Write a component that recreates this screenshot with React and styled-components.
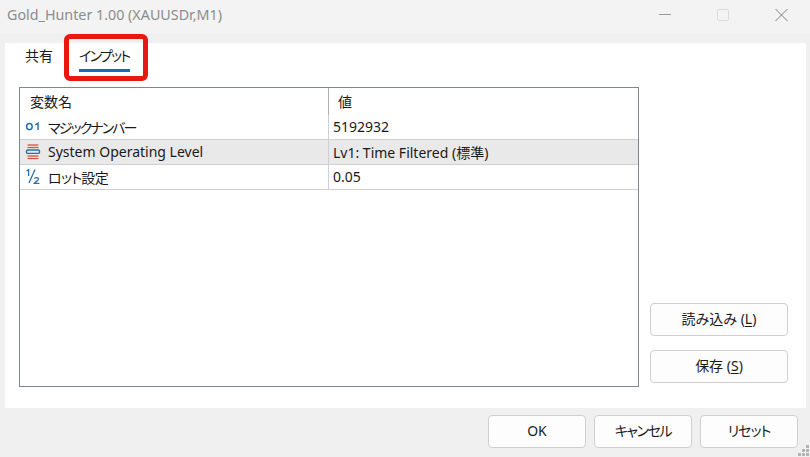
import React from "react";
import styled, { createGlobalStyle } from "styled-components";

const GlobalStyle = createGlobalStyle`
  html, body {
    margin: 0;
    padding: 0;
    background: #f0f0f0;
  }
  body {
    font-family: "Noto Sans", "Noto Sans CJK JP", sans-serif;
    font-size: 14px;
    font-feature-settings: "palt";
    color: #1a1a1a;
  }
`;

const rows = [
  { icon: "int", name: "マジックナンバー", tight: "-1.9px", value: "5192932" },
  { icon: "enum", name: "System Operating Level", value: "Lv1: Time Filtered (標準)", selected: true },
  { icon: "frac", name: "ロット設定", tight: "-0.7px", value: "0.05" },
];

const IntIcon = () => (
  <svg width="16" height="16" viewBox="0 0 16 16" fill="none" stroke="#2a6fb0" strokeWidth="1.5">
    <ellipse cx="4.4" cy="7.6" rx="2.8" ry="3.1" />
    <path d="M10.2 5.8 L13 4.2 V11" />
  </svg>
);

const EnumIcon = () => (
  <svg width="18" height="18" viewBox="0 0 18 18" fill="none">
    <path d="M3.5 2 H14.5" stroke="#d9534a" strokeWidth="1.3" />
    <path d="M3.5 4.5 H14.5" stroke="#d9534a" strokeWidth="1.3" />
    <rect x="2.5" y="7" width="13" height="3.4" rx="1.2" stroke="#2a6fb0" strokeWidth="1.4" />
    <path d="M3.5 13 H14.5" stroke="#d9534a" strokeWidth="1.3" />
    <path d="M3.5 15.5 H14.5" stroke="#d9534a" strokeWidth="1.3" />
  </svg>
);

const FracIcon = () => (
  <svg width="16" height="18" viewBox="0 0 16 18" fill="none" stroke="#2a6fb0" strokeWidth="1.3">
    <path d="M1.5 3 L3.6 1.6 V8" />
    <path d="M10 1.5 L4 15" />
    <path d="M9.3 10.8 C10 9 13.6 9.2 13.4 11.2 C13.3 12.6 10.6 13.6 9.3 15.4 H14.4" />
  </svg>
);

const icons = { int: IntIcon, enum: EnumIcon, frac: FracIcon };

const App = () => {
  return (
    <Window>
      <GlobalStyle />
      <TitleBar>
        <Title>Gold_Hunter 1.00 (XAUUSDr,M1)</Title>
        <WindowControls>
          <svg width="14" height="14" viewBox="0 0 14 14" stroke="#9a9a9a" fill="none">
            <path d="M0 6.5 H12" />
          </svg>
          <svg width="14" height="14" viewBox="0 0 14 14" stroke="#dcdcdc" fill="none">
            <rect x="0.5" y="1.5" width="11" height="11" rx="1.5" />
          </svg>
          <svg width="14" height="14" viewBox="0 0 14 14" stroke="#7d7d7d" fill="none">
            <path d="M0.5 1 L12.5 13 M12.5 1 L0.5 13" />
          </svg>
        </WindowControls>
      </TitleBar>

      <Panel>
        <Tabs>
          <Tab>共有</Tab>
          <Tab $active $tight="-1.7px">インプット</Tab>
          <Highlight />
        </Tabs>
        <Content>
          <Table>
            <HeaderRow>
              <HeaderName>変数名</HeaderName>
              <HeaderValue>値</HeaderValue>
            </HeaderRow>
            {rows.map((row) => {
              const Icon = icons[row.icon];
              return (
                <Row key={row.name} $selected={row.selected}>
                  <NameCell>
                    <IconSlot>
                      <Icon />
                    </IconSlot>
                    <NameText $tight={row.tight}>{row.name}</NameText>
                  </NameCell>
                  <ValueCell>{row.value}</ValueCell>
                </Row>
              );
            })}
          </Table>
          <SideButtons>
            <Button>
              読み込み (<u>L</u>)
            </Button>
            <Button>
              保存 (<u>S</u>)
            </Button>
          </SideButtons>
        </Content>
      </Panel>

      <Footer>
        <Button $wide>OK</Button>
        <Button $wide $tight="-1.4px">キャンセル</Button>
        <Button $wide $tight="-1px">リセット</Button>
        <Grip>
          <svg width="12" height="12" viewBox="0 0 12 12" fill="#b4b4b4">
            <rect x="8" y="0" width="3" height="3" />
            <rect x="4" y="4" width="3" height="3" />
            <rect x="8" y="4" width="3" height="3" />
            <rect x="0" y="8" width="3" height="3" />
            <rect x="4" y="8" width="3" height="3" />
            <rect x="8" y="8" width="3" height="3" />
          </svg>
        </Grip>
      </Footer>
    </Window>
  );
};

export default App;

const Window = styled.div`
  position: relative;
  width: 810px;
  height: 457px;
  overflow: hidden;
  background: #f0f0f0;
`;

const TitleBar = styled.div`
  display: flex;
  align-items: center;
  justify-content: space-between;
  box-sizing: border-box;
  height: 33px;
  padding: 0 0 4px 7px;
  background: #f3f3f3;
`;

const Title = styled.div`
  font-size: 14.3px;
  color: #8c8c8c;
`;

const WindowControls = styled.div`
  display: flex;
  align-items: center;
  gap: 44px;
  padding-right: 21px;
  svg {
    display: block;
  }
`;

const Panel = styled.div`
  display: flex;
  flex-direction: column;
  height: 365px;
  margin: 10px 4px 0 5px;
  background: #fff;
`;

const Tabs = styled.div`
  position: relative;
  display: flex;
  gap: 26px;
  height: 44px;
  padding-left: 20px;
`;

const Tab = styled.div`
  position: relative;
  padding-top: 3px;
  line-height: 20px;
  letter-spacing: ${(p) => p.$tight || "normal"};
  ${(p) =>
    p.$active &&
    `
    &::after {
      content: "";
      position: absolute;
      left: 0;
      right: 0;
      top: 26px;
      height: 3px;
      background: #0a6fc2;
    }
  `}
`;

const Highlight = styled.div`
  position: absolute;
  left: 59px;
  top: -9px;
  width: 84px;
  height: 47px;
  box-sizing: border-box;
  border: 5px solid #e8170f;
  border-radius: 6px;
`;

const Content = styled.div`
  display: flex;
  gap: 11px;
  padding-left: 14px;
`;

const Table = styled.div`
  box-sizing: border-box;
  width: 620px;
  height: 300px;
  border: 1px solid #7f8790;
`;

const HeaderRow = styled.div`
  display: grid;
  grid-template-columns: 309px 1fr;
  height: 27px;
  align-items: stretch;
`;

const HeaderName = styled.div`
  display: flex;
  align-items: center;
  padding: 0 0 1px 10px;
  border-right: 1px solid #b0b0b0;
`;

const HeaderValue = styled.div`
  display: flex;
  align-items: center;
  padding: 0 0 1px 9px;
`;

const Row = styled.div`
  display: grid;
  grid-template-columns: 309px 1fr;
  box-sizing: border-box;
  height: 25px;
  align-items: stretch;
  border-bottom: 1px solid #d0d0d0;
  background: ${(p) => (p.$selected ? "#e9e9e9" : "#fff")};
`;

const NameCell = styled.div`
  display: flex;
  align-items: center;
  padding-bottom: 1px;
  border-right: 1px solid #d0d0d0;
`;

const IconSlot = styled.span`
  display: flex;
  justify-content: center;
  width: 19px;
  margin: 0 6px 0 3px;
`;

const NameText = styled.span`
  letter-spacing: ${(p) => p.$tight || "normal"};
`;

const ValueCell = styled.div`
  display: flex;
  align-items: center;
  padding: 0 0 1px 4px;
`;

const SideButtons = styled.div`
  display: flex;
  flex-direction: column;
  justify-content: flex-end;
  gap: 14px;
  height: 296px;
`;

const Button = styled.button`
  box-sizing: border-box;
  width: ${(p) => (p.$wide ? "98px" : "138px")};
  height: 33px;
  padding: 0 0 3px;
  border: 1px solid #cfcfcf;
  border-radius: 4px;
  background: #fdfdfd;
  color: #1a1a1a;
  font: inherit;
  font-feature-settings: inherit;
  letter-spacing: ${(p) => p.$tight || "normal"};
  text-align: center;
  u {
    text-underline-offset: 2px;
  }
`;

const Footer = styled.div`
  display: flex;
  justify-content: flex-end;
  gap: 8px;
  padding: 7px 12px 0 0;
`;

const Grip = styled.span`
  position: absolute;
  right: 0;
  bottom: 0;
  svg {
    display: block;
  }
`;
